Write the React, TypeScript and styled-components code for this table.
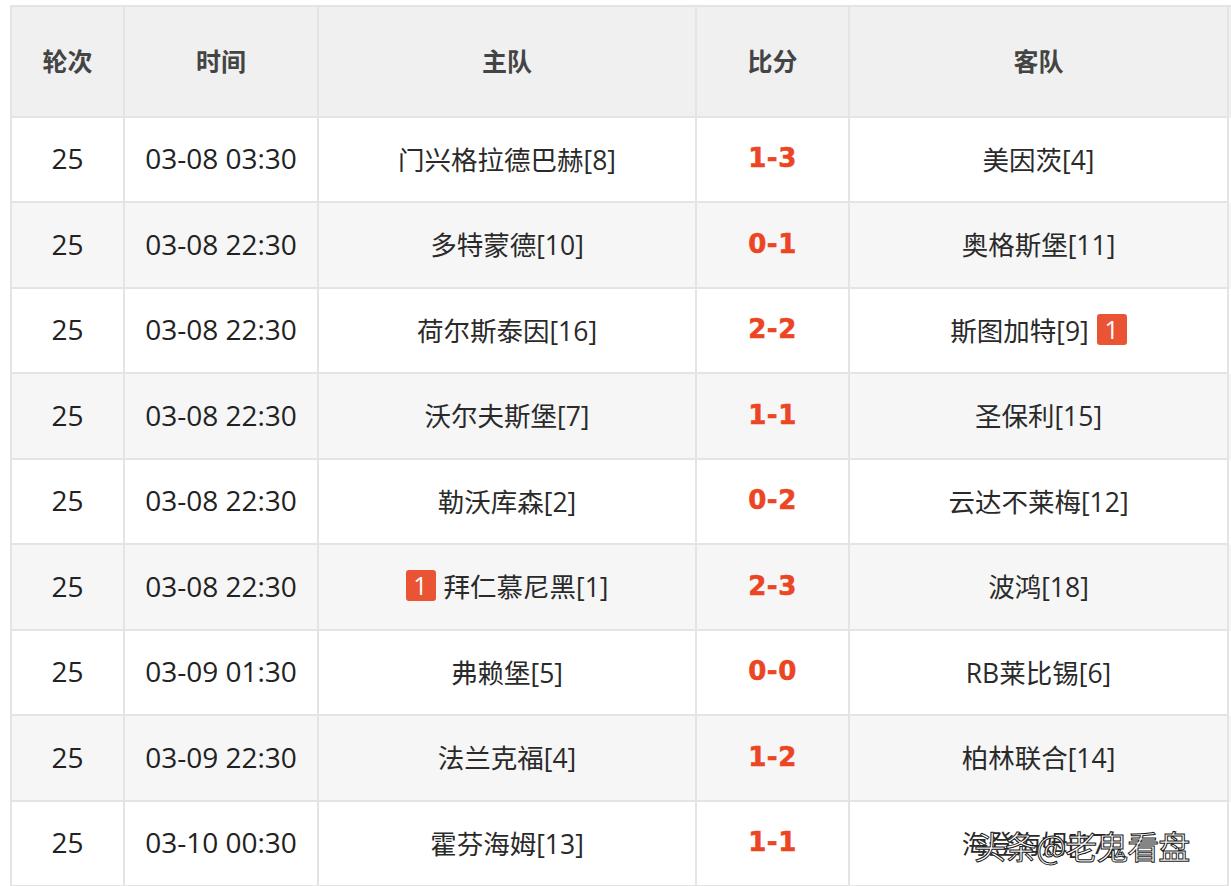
import React from 'react';
import styled, {createGlobalStyle} from 'styled-components';

const GlobalStyle = createGlobalStyle`
  body {
    margin: 0;
    background: #ffffff;
    font-family: "Open Sans", "Noto Sans CJK SC", sans-serif;
    overflow: hidden;
  }
`;

const Page = styled.div`
  padding: 5px 0 0 10px;
`;

const Table = styled.div`
  width: 1219px;
  border-top: 2px solid #e4e4e4;
  border-left: 2px solid #e4e4e4;
`;

const Row = styled.div<{ $bg: string; $h: number }>`
  display: grid;
  grid-template-columns: 113px 194px 378px 153px 379px;
  height: ${p => p.$h}px;
  background: ${p => p.$bg};
`;

const Cell = styled.div`
  position: relative;
  display: flex;
  align-items: center;
  justify-content: center;
  gap: 8px;
  padding-bottom: 3px;
  border-right: 2px solid #e4e4e4;
  border-bottom: 2px solid #e4e4e4;
  font-size: 28px;
  color: #222222;
  white-space: nowrap;
`;

const HeadCell = styled(Cell)`
  font-family: "Noto Sans CJK SC", sans-serif;
  font-weight: 700;
  font-size: 25px;
  color: #444444;
`;

const Team = styled.span`
  font-family: "Open Sans", "Noto Sans CJK SC", sans-serif;
  font-size: 26.5px;
  color: #2a2a2a;
`;

const Score = styled.span`
  font-family: "DejaVu Sans", sans-serif;
  font-weight: 700;
  font-size: 26px;
  color: #ec4524;
  letter-spacing: 0.5px;
  -webkit-text-stroke: 0.6px #ec4524;
`;

const Badge = styled.span`
  display: inline-flex;
  align-items: center;
  justify-content: center;
  width: 30px;
  height: 31px;
  border-radius: 3px;
  background: #ea5435;
  color: #ffffff;
  font-size: 25px;
  line-height: 1;
`;

const Watermark = styled.span`
  position: absolute;
  left: 124px;
  top: 20px;
  font-family: "Noto Sans CJK SC", sans-serif;
  font-size: 32px;
  color: #ffffff;
  -webkit-text-stroke: 1px #1a1a1a;
  letter-spacing: -1px;
`;

type Match = {
  time: string;
  home: string;
  score: string;
  away: string;
  homeBadge?: string;
  awayBadge?: string;
};

const matches: Match[] = [
  {time: '03-08 03:30', home: '门兴格拉德巴赫[8]', score: '1-3', away: '美因茨[4]'},
  {time: '03-08 22:30', home: '多特蒙德[10]', score: '0-1', away: '奥格斯堡[11]'},
  {time: '03-08 22:30', home: '荷尔斯泰因[16]', score: '2-2', away: '斯图加特[9]', awayBadge: '1'},
  {time: '03-08 22:30', home: '沃尔夫斯堡[7]', score: '1-1', away: '圣保利[15]'},
  {time: '03-08 22:30', home: '勒沃库森[2]', score: '0-2', away: '云达不莱梅[12]'},
  {time: '03-08 22:30', home: '拜仁慕尼黑[1]', score: '2-3', away: '波鸿[18]', homeBadge: '1'},
  {time: '03-09 01:30', home: '弗赖堡[5]', score: '0-0', away: 'RB莱比锡[6]'},
  {time: '03-09 22:30', home: '法兰克福[4]', score: '1-2', away: '柏林联合[14]'},
  {time: '03-10 00:30', home: '霍芬海姆[13]', score: '1-1', away: '海登海姆[17]'},
];

function App() {
    return (
        <Page>
            <GlobalStyle/>
            <Table>
                <Row $bg="#f0f0f0" $h={111}>
                    <HeadCell>轮次</HeadCell>
                    <HeadCell>时间</HeadCell>
                    <HeadCell>主队</HeadCell>
                    <HeadCell>比分</HeadCell>
                    <HeadCell>客队</HeadCell>
                </Row>
                {matches.map((m, i) => (
                    <Row key={i} $bg={i % 2 === 1 ? '#f6f6f6' : '#ffffff'} $h={i % 2 === 0 ? 85 : 86}>
                        <Cell>25</Cell>
                        <Cell>{m.time}</Cell>
                        <Cell>
                            {m.homeBadge ? <Badge>{m.homeBadge}</Badge> : null}
                            <Team>{m.home}</Team>
                        </Cell>
                        <Cell><Score>{m.score}</Score></Cell>
                        <Cell>
                            <Team>{m.away}</Team>
                            {m.awayBadge ? <Badge>{m.awayBadge}</Badge> : null}
                            {i === matches.length - 1 ? <Watermark>头条@老鬼看盘</Watermark> : null}
                        </Cell>
                    </Row>
                ))}
            </Table>
        </Page>
    );
}

export default App;
